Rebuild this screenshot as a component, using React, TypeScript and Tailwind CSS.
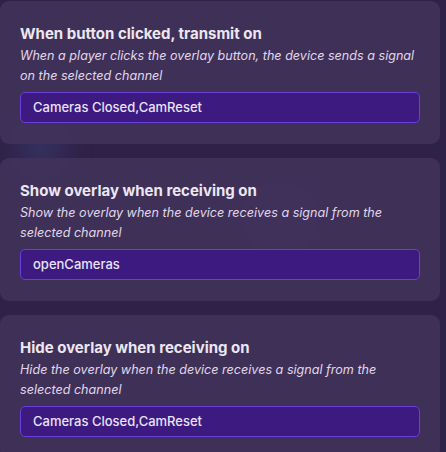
import React from "react";

const SETTINGS = [
  {
    title: "When button clicked, transmit on",
    description:
      "When a player clicks the overlay button, the device sends a signal on the selected channel",
    value: "Cameras Closed,CamReset",
  },
  {
    title: "Show overlay when receiving on",
    description:
      "Show the overlay when the device receives a signal from the selected channel",
    value: "openCameras",
  },
  {
    title: "Hide overlay when receiving on",
    description:
      "Hide the overlay when the device receives a signal from the selected channel",
    value: "Cameras Closed,CamReset",
  },
];

function ChannelSetting({
  title,
  description,
  value,
}: {
  title: string;
  description: string;
  value: string;
}) {
  return (
    <div className="relative w-[440px] rounded-[9px] bg-[#40315a]/95 px-5 pt-5 pb-[21px]">
      <h3 className="text-[15px] font-bold leading-[25px] text-[#ebe7f1]">{title}</h3>
      <p className="text-[12.6px] italic leading-5 text-[#e0d8ea]">{description}</p>
      <div className="mt-1.5 flex h-[31px] items-center rounded-[5px] border border-[#6a3ed8] bg-[#3d1a80] px-3 text-[13px] font-medium text-[#e9e3f7]">
        {value}
      </div>
    </div>
  );
}

export default function App() {
  return (
    <div
      className="relative h-[452px] w-[446px] overflow-hidden bg-[#2f2248]"
      style={{ fontFamily: "Inter, 'Noto Sans', sans-serif" }}
    >
      {/* faint shapes behind the translucent panels */}
      <div className="absolute left-[16px] top-[122px] h-[50px] w-[50px] rounded-full bg-[#35305e] blur-md" />
      <div className="absolute left-[252px] top-[192px] h-[52px] w-[56px] rounded-[12px] bg-[#3b3466] blur-sm" />

      <div className="relative flex flex-col gap-[14px] pt-px">
        {SETTINGS.map((s) => (
          <ChannelSetting key={s.title} {...s} />
        ))}
      </div>
    </div>
  );
}
